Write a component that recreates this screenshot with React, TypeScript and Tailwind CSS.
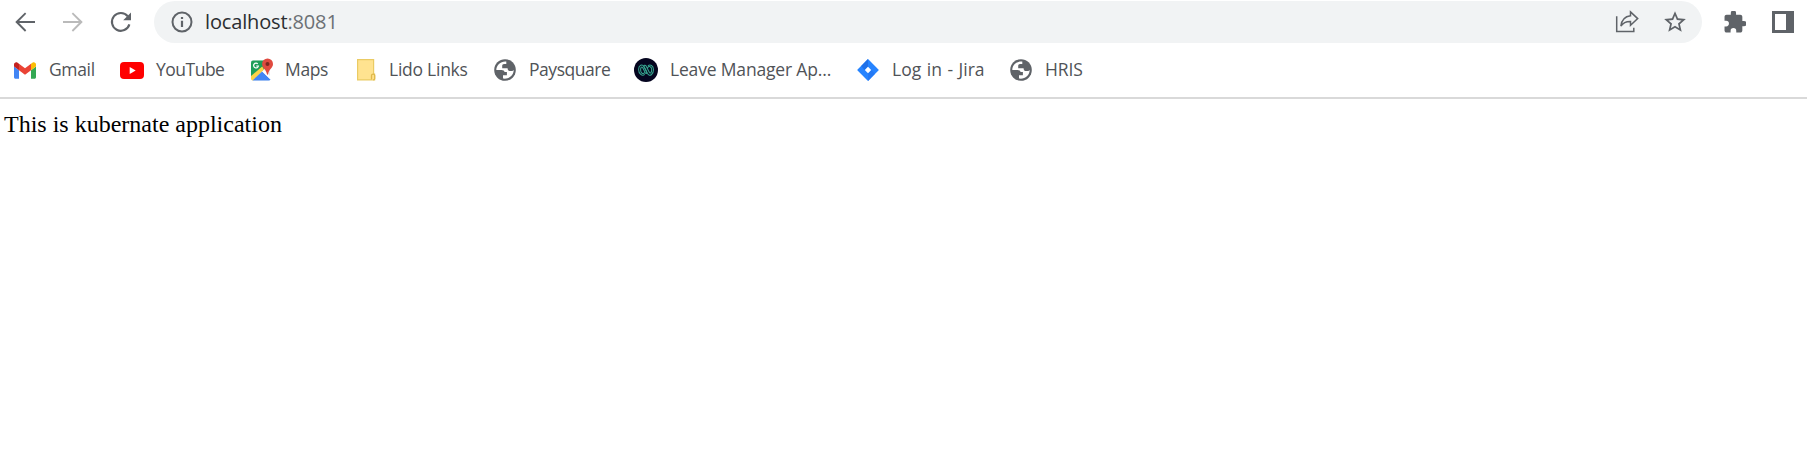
import React from "react";

function Back({ flip = false }: { flip?: boolean }) {
  return (
    <svg viewBox="0 0 24 24" className={flip ? "size-[30px] rotate-180 text-[#bababa]" : "size-[30px] text-[#5f6368]"}>
      <path d="M20 11.2H7.3l5.7-5.8L12 4.3 4.2 12l7.8 7.7 1-1.1-5.7-5.8H20z" fill="currentColor" />
    </svg>
  );
}

function Gmail() {
  return (
    <svg viewBox="52 42 88 66" className="h-[17px] w-[22px]">
      <path fill="#4285f4" d="M58 108h14V74L52 59v43c0 3.32 2.69 6 6 6" />
      <path fill="#34a853" d="M120 108h14c3.32 0 6-2.69 6-6V59l-20 15" />
      <path fill="#fbbc04" d="M120 48v26l20-15v-8c0-7.42-8.47-11.65-14.4-7.2" />
      <path fill="#ea4335" d="M72 74V48l24 18 24-18v26L96 92" />
      <path fill="#c5221f" d="M52 51v8l20 15V48l-5.6-4.2c-5.94-4.45-14.4-.22-14.4 7.2" />
    </svg>
  );
}

function YouTube() {
  return (
    <svg viewBox="0 0 24 17" className="h-[17px] w-6">
      <rect width="24" height="17" rx="4" fill="#f00" />
      <path d="M9.7 5v7l6-3.5z" fill="#fff" />
    </svg>
  );
}

function Maps() {
  return (
    <svg viewBox="0 0 24 24" className="size-6">
      <rect x="1" y="2.5" width="19" height="20" rx="2" fill="#e8eaec" />
      <path d="M3 2.5h14v6L2.5 21.5 1 20V4.5q0-2 2-2z" fill="#1e9e58" />
      <path d="m1 18 11.2-9.5 1.8 3L3 22.5q-2 0-2-2z" fill="#fdd347" />
      <path d="M2.5 22.5 12.2 13.5 20.5 21.5q-.5 1-1.5 1z" fill="#4285f4" />
      <path d="m12.2 13.5 1.8-1.6 6.5 6.5v3.1z" fill="#fff" />
      <path d="M7.8 5.9A2.4 2.4 0 1 0 8.4 8H6.2" fill="none" stroke="#fff" strokeWidth="1.2" />
      <path d="M17.5.5a5.4 5.4 0 0 0-5.4 5.4c0 4 4.2 5.1 4.8 10.2 0 .8 1.2.8 1.2 0 .7-5.1 4.9-6.2 4.900-10.2A5.4 5.4 0 0 0 17.5.5z" fill="#e04a3f" />
      <circle cx="17.5" cy="5.9" r="2" fill="#7c2720" />
    </svg>
  );
}

function Folder() {
  return (
    <svg viewBox="0 0 24 24" className="size-6">
      <path d="M3.6 1.6h16v14.5h1v5.8h-17z" fill="#ffe390" stroke="#eacb64" strokeWidth="1.2" />
      <path d="M17.5 21.5v-4.1q0-1.3 1.6-1.3 1.6 0 1.6 1.3v3.4q0 1-1.6 1" fill="#ffe08a" stroke="#dfb94c" strokeWidth="1.3" />
    </svg>
  );
}

function Globe() {
  return (
    <svg viewBox="0 0 24 24" className="size-6">
      <circle cx="12" cy="12" r="10.8" fill="#5f6368" />
      <path d="M13.3 3.5C8 2.9 3.4 6.7 3.3 12h5.3q2.6 0 3.1 2.1h2.2v3.2H10v3.3c5.6 1 10.6-3.1 10.7-8.6-.8 1-1.7 1.1-3.2 1.1-2.6 0-2.8-1.6-2.9-2.9H9.2V7.6q0-1.5 1.8-1.5h2.3z" fill="#fff" />
    </svg>
  );
}

function Leave() {
  return (
    <svg viewBox="0 0 24 24" className="size-6">
      <circle cx="12" cy="12" r="12" fill="#05051f" />
      <g fill="none" stroke="#36a58f" strokeWidth="1.05">
        <path d="M10.7 16.4C8.3 18.7 4.6 15.8 4.6 11.5c0-4.4 3.7-5.8 5.4-2.7l3.5 6.8c2.2 3.6 6 .6 6-3.8 0-4.3-3.5-6-5.6-3.7" />
        <path d="M10.8 14.2c-1.8 3-4.2.6-4.2-2.5 0-2.8 1.4-3.4 2.3-1.6l2.5 4.9c1 1.5 1.7-.2 1-1.7L10 8.5c-.6-1.3 1.3-2 2.1-.4l3.2 6.2c1 1.8 2.4.1 2.4-2.6 0-2.8-2.6-4.6-4.1-1.8" />
      </g>
    </svg>
  );
}

function Jira() {
  return (
    <svg viewBox="0 0 24 24" className="size-6">
      <path d="M12 1.1 22.9 12 12 22.9 1.1 12z" fill="#2684ff" />
      <path d="M12 1.1v7.5L8.5 12 5.2 8z" fill="#1f70e8" />
      <path d="M12 22.9v-7.5l3.5-3.4 3.3 4z" fill="#2479f4" />
      <path d="m12 8.8 3.2 3.2-3.2 3.2L8.8 12z" fill="#fff" />
    </svg>
  );
}

const bookmarks = [
  { label: "Gmail", icon: <Gmail />, box: "w-[107px]", track: "tracking-[-0.35px]" },
  { label: "YouTube", icon: <YouTube />, box: "w-[130px]", track: "tracking-[-0.5px]" },
  { label: "Maps", icon: <Maps />, box: "w-[104px]", track: "tracking-[-0.35px] -ml-px" },
  { label: "Lido Links", icon: <Folder />, box: "w-[139px]", track: "tracking-[-0.25px] -ml-px" },
  { label: "Paysquare", icon: <Globe />, box: "w-[141px]", track: "tracking-[-0.45px]" },
  { label: "Leave Manager Ap...", icon: <Leave />, box: "w-[222px]", track: "tracking-[-0.17px]" },
  { label: "Log in - Jira", icon: <Jira />, box: "w-[153px]", track: "tracking-[0px] [word-spacing:1px]" },
  { label: "HRIS", icon: <Globe />, box: "w-[107px]", track: "tracking-[-0.15px]" },
];

export default function App() {
  return (
    <div className="flex h-[464px] w-full flex-col overflow-hidden bg-white font-['Open_Sans','Noto_Sans',sans-serif]">
      <header className="flex h-[99px] shrink-0 flex-col border-b-2 border-[#d9d9d9]">
        <nav className="flex h-[43px] shrink-0 items-center pt-px">
          <div className="flex w-[154px] items-center gap-[18px] pl-[10px]">
            <Back />
            <Back flip />
            <svg viewBox="0 0 22 22" className="ml-1 size-[22px] text-[#5f6368]">
              <path d="M17.8 5.3A8.9 8.9 0 1 0 19.4 13.4" fill="none" stroke="currentColor" strokeWidth="2.1" />
              <path d="M21 1.5v7.8h-7.8z" fill="currentColor" />
            </svg>
          </div>
          <div className="flex h-[42px] w-[1548px] items-center rounded-full bg-[#f1f3f4] pl-[17px] pr-[14px]">
            <svg viewBox="0 0 22 22" className="size-[22px]">
              <circle cx="11" cy="11" r="9.5" fill="none" stroke="#5f6368" strokeWidth="2" />
              <path d="M9.9 9.7h2.2v6.2H9.9zM9.9 5.9h2.2v2.2H9.9z" fill="#5f6368" />
            </svg>
            <span className="ml-3 whitespace-nowrap text-[20px] leading-6 tracking-[-0.15px] text-[#2b2e31]">
              localhost<span className="text-[#6c7075]">:8081</span>
            </span>
            <div className="ml-auto flex items-center gap-[23px]">
              <svg viewBox="0 0 24 24" className="size-6" fill="none" stroke="#5f6368" strokeWidth="1.5">
                <path d="M1.7 6.2v15.3h17.1v-3.7" />
                <path d="M15.5 1.9 22.7 8.6l-7.2 6.6v-3.8C11 11.3 8.1 12.6 5.9 16.2c.6-5.4 3.8-9.7 9.6-10.4z" strokeLinejoin="miter" />
              </svg>
              <svg viewBox="0 0 24 24" className="size-[26px]">
                <path d="m22 9.24-7.19-.62L12 2 9.19 8.63 2 9.24l5.46 4.73L5.82 21 12 17.27 18.18 21l-1.63-7.03zM12 15.4l-3.76 2.27 1-4.28-3.32-2.88 4.38-.38L12 6.1l1.71 4.04 4.38.38-3.32 2.88 1 4.28z" fill="#5f6368" />
              </svg>
            </div>
          </div>
          <div className="flex items-center gap-[26px] pl-[22px]">
            <svg viewBox="1.5 1.5 21 21" className="size-[22px]">
              <path d="M20.5 11H19V7c0-1.1-.9-2-2-2h-4V3.5a2.5 2.5 0 0 0-5 0V5H4c-1.1 0-1.99.9-1.99 2v3.8H3.5a2.7 2.7 0 0 1 0 5.4H2V20c0 1.1.9 2 2 2h3.8v-1.5a2.7 2.7 0 0 1 5.4 0V22H17c1.1 0 2-.9 2-2v-4h1.5a2.5 2.5 0 0 0 0-5" fill="#5f6368" />
            </svg>
            <svg viewBox="0 0 22 22" className="size-[22px]">
              <path d="M0 0h22v22H0z" fill="#5f6368" />
              <path d="M3 3h11v16H3z" fill="#fff" />
            </svg>
          </div>
        </nav>
        <div className="flex h-[54px] items-center pl-[13px]">
          {bookmarks.map((b) => (
            <div key={b.label} className={`flex shrink-0 items-center gap-3 ${b.box}`}>
              <span className="flex w-6 shrink-0 justify-center">{b.icon}</span>
              <span className={`whitespace-nowrap pb-0.5 text-[17.5px] leading-6 text-[#505357] ${b.track}`}>{b.label}</span>
            </div>
          ))}
        </div>
      </header>
      <main className="px-1 pt-[11px] font-['Liberation_Serif',serif] text-[24px] leading-7 text-black">
        This is kubernate application
      </main>
    </div>
  );
}
